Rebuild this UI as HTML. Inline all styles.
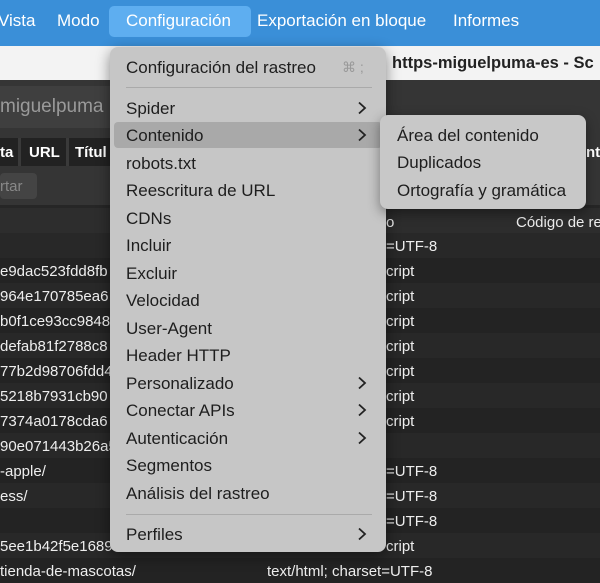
<!DOCTYPE html>
<html><head><meta charset="utf-8"><style>
*{margin:0;padding:0;box-sizing:border-box}
body{width:600px;height:575px;overflow:hidden;position:relative;background:#262626;font-family:"Liberation Sans",Arial,sans-serif;}
.abs{position:absolute;white-space:nowrap}
.bar{left:0;top:0;width:600px;height:46px;background:#3a8fd8}
.bar span{position:absolute;top:11px;font-size:17px;color:#fff}
.sel{left:109px;top:6px;width:142px;height:31px;background:#5eaef0;border-radius:5px}
.white{left:0;top:46px;width:600px;height:34px;background:#f3f3f3}
.title{left:392px;top:54px;font-size:16.5px;font-weight:bold;color:#222}
.dark1{left:0;top:80px;width:600px;height:125px;background:#353535}
.band{left:0;top:86px;width:120px;height:42px;background:#3f3f3f}
.row{left:0;width:600px;height:25px;font-size:15px;color:#eee}
.menu{left:110px;top:47px;width:276px;height:505px;background:#c6c6c6;border-radius:8px;box-shadow:0 4px 14px rgba(0,0,0,.45)}
.mi{position:absolute;left:16px;font-size:17px;color:#1e1e1e}
.chev{position:absolute;left:247px;width:10px;height:14px}
.sep{position:absolute;left:16px;width:246px;height:1px;background:#aaa}
.sub{left:380px;top:115px;width:206px;height:94px;background:#c8c8c8;border-radius:8px;box-shadow:0 4px 12px rgba(0,0,0,.4)}
</style></head><body>
<div class="abs bar">
<div class="abs sel"></div>
<span style="left:-2px">Vista</span><span style="left:57px">Modo</span><span style="left:126px">Configuración</span><span style="left:257px">Exportación en bloque</span><span style="left:453px">Informes</span>
</div>
<div class="abs white"></div>
<div class="abs title">https-miguelpuma-es - Sc</div>
<div class="abs dark1"></div>
<div class="abs band"></div>
<div class="abs" style="left:0;top:96px;font-size:19px;color:#9a9a9a">miguelpuma</div>
<div class="abs" style="left:0;top:138px;width:110px;height:28px;background:#222"></div>
<div class="abs" style="left:18px;top:138px;width:3px;height:28px;background:#3a3a3a"></div>
<div class="abs" style="left:66px;top:138px;width:3px;height:28px;background:#3a3a3a"></div>
<div class="abs" style="left:0;top:144px;font-size:15px;font-weight:bold;color:#fff">ta</div>
<div class="abs" style="left:29px;top:144px;font-size:15px;font-weight:bold;color:#fff">URL</div>
<div class="abs" style="left:75px;top:144px;font-size:15px;font-weight:bold;color:#fff">Títul</div>
<div class="abs" style="left:586px;top:144px;font-size:15px;font-weight:bold;color:#fff">nte</div>
<div class="abs" style="left:0;top:173px;width:37px;height:26px;background:#444;border-radius:4px"></div>
<div class="abs" style="left:0;top:178px;font-size:15px;color:#888">rtar</div>
<div class="abs" style="left:0;top:208px;width:600px;height:25px;background:#2d2d2d"></div>
<div class="abs" style="left:386px;top:214px;font-size:15px;color:#eee">o</div>
<div class="abs" style="left:516px;top:214px;font-size:15px;color:#eee">Código de re</div>
<div class="abs row" style="top:233px;background:#282828"><span class="abs" style="left:386px;top:5px">=UTF-8</span></div>
<div class="abs row" style="top:258px;background:#232323"><span class="abs" style="left:0;top:5px">e9dac523fdd8fb</span><span class="abs" style="left:386px;top:5px">cript</span></div>
<div class="abs row" style="top:283px;background:#282828"><span class="abs" style="left:0;top:5px">964e170785ea6</span><span class="abs" style="left:386px;top:5px">cript</span></div>
<div class="abs row" style="top:308px;background:#232323"><span class="abs" style="left:0;top:5px">b0f1ce93cc9848</span><span class="abs" style="left:386px;top:5px">cript</span></div>
<div class="abs row" style="top:333px;background:#282828"><span class="abs" style="left:0;top:5px">defab81f2788c8</span><span class="abs" style="left:386px;top:5px">cript</span></div>
<div class="abs row" style="top:358px;background:#232323"><span class="abs" style="left:0;top:5px">77b2d98706fdd4</span><span class="abs" style="left:386px;top:5px">cript</span></div>
<div class="abs row" style="top:383px;background:#282828"><span class="abs" style="left:0;top:5px">5218b7931cb90</span><span class="abs" style="left:386px;top:5px">cript</span></div>
<div class="abs row" style="top:408px;background:#232323"><span class="abs" style="left:0;top:5px">7374a0178cda6</span><span class="abs" style="left:386px;top:5px">cript</span></div>
<div class="abs row" style="top:433px;background:#282828"><span class="abs" style="left:0;top:5px">90e071443b26a5</span></div>
<div class="abs row" style="top:458px;background:#232323"><span class="abs" style="left:0;top:5px">-apple/</span><span class="abs" style="left:386px;top:5px">=UTF-8</span></div>
<div class="abs row" style="top:483px;background:#282828"><span class="abs" style="left:0;top:5px">ess/</span><span class="abs" style="left:386px;top:5px">=UTF-8</span></div>
<div class="abs row" style="top:508px;background:#232323"><span class="abs" style="left:386px;top:5px">=UTF-8</span></div>
<div class="abs row" style="top:533px;background:#282828"><span class="abs" style="left:0;top:5px">5ee1b42f5e1689</span><span class="abs" style="left:386px;top:5px">cript</span></div>
<div class="abs row" style="top:558px;background:#232323"><span class="abs" style="left:0;top:5px">tienda-de-mascotas/</span><span class="abs" style="left:267px;top:5px">text/html; charset=UTF-8</span></div>

<div class="abs menu">
<div style="position:absolute;left:4px;top:75px;width:268px;height:26px;background:#a9a9a9;border-radius:4px"></div>
<div class="mi" style="top:11px">Configuración del rastreo</div><div class="mi" style="left:232px;top:12px;color:#999;font-size:14px">⌘ ;</div>
<div class="sep" style="top:40px"></div>
<div class="mi" style="top:52px">Spider</div><svg class="chev" style="top:54px" viewBox="0 0 10 14"><polyline points="2,1.5 8,7 2,12.5" fill="none" stroke="#222" stroke-width="1.8"/></svg>
<div class="mi" style="top:79px">Contenido</div><svg class="chev" style="top:81px" viewBox="0 0 10 14"><polyline points="2,1.5 8,7 2,12.5" fill="none" stroke="#222" stroke-width="1.8"/></svg>
<div class="mi" style="top:107px">robots.txt</div>
<div class="mi" style="top:134px">Reescritura de URL</div>
<div class="mi" style="top:162px">CDNs</div>
<div class="mi" style="top:189px">Incluir</div>
<div class="mi" style="top:217px">Excluir</div>
<div class="mi" style="top:244px">Velocidad</div>
<div class="mi" style="top:272px">User-Agent</div>
<div class="mi" style="top:299px">Header HTTP</div>
<div class="mi" style="top:327px">Personalizado</div><svg class="chev" style="top:329px" viewBox="0 0 10 14"><polyline points="2,1.5 8,7 2,12.5" fill="none" stroke="#222" stroke-width="1.8"/></svg>
<div class="mi" style="top:354px">Conectar APIs</div><svg class="chev" style="top:356px" viewBox="0 0 10 14"><polyline points="2,1.5 8,7 2,12.5" fill="none" stroke="#222" stroke-width="1.8"/></svg>
<div class="mi" style="top:382px">Autenticación</div><svg class="chev" style="top:384px" viewBox="0 0 10 14"><polyline points="2,1.5 8,7 2,12.5" fill="none" stroke="#222" stroke-width="1.8"/></svg>
<div class="mi" style="top:409px">Segmentos</div>
<div class="mi" style="top:437px">Análisis del rastreo</div>
<div class="sep" style="top:467px"></div>
<div class="mi" style="top:478px">Perfiles</div><svg class="chev" style="top:480px" viewBox="0 0 10 14"><polyline points="2,1.5 8,7 2,12.5" fill="none" stroke="#222" stroke-width="1.8"/></svg>
</div>
<div class="abs sub">
<div class="mi" style="top:11px;left:17px">Área del contenido</div>
<div class="mi" style="top:38px;left:17px">Duplicados</div>
<div class="mi" style="top:66px;left:17px">Ortografía y gramática</div>
</div>
</body></html>
